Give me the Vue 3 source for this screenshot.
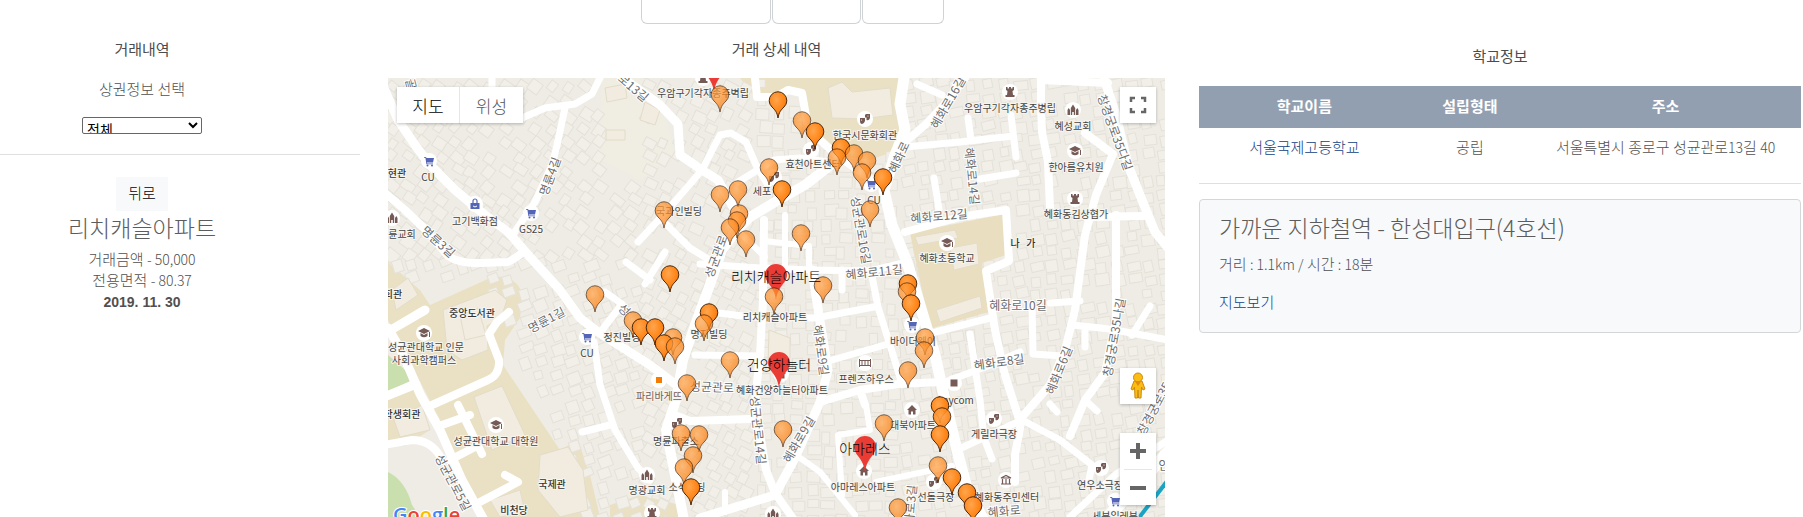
<script setup>
import { ref } from 'vue'

const category = ref('all')

const cells = []
const noise = (n) => {
  const v = Math.sin(n * 127.1 + 11.7) * 43758.5453
  return v - Math.floor(v)
}
for (let row = 0; row < 32; row++) {
  for (let col = 0; col < 50; col++) {
    const id = row * 50 + col
    const cx = 388 + col * 16 + noise(id) * 5
    const cy = 78 + row * 14 + noise(id + 3000) * 4
    const openYard = cx > 598 && cx < 640 && cy < 165
    const campus = cx < 560 && cy > 275 && cx < 480 + (cy - 275) * 0.45
    const northHall = cx > 775 && cx < 900 && cy < 150 && cy < 90 + (cx - 775)
    if (openYard || campus || northHall || noise(id + 9000) < 0.12) continue
    let turn = -14
    if (cx < 640) turn = cy < 260 ? 32 : -24
    else if (cx < 745) turn = 24
    else if (cx < 900) turn = -4
    cells.push({
      id,
      w: 8 + Math.round(noise(id + 5000) * 6),
      h: 8 + Math.round(noise(id + 7000) * 4),
      move: `translate(${cx.toFixed(1)} ${cy.toFixed(1)}) rotate(${turn + Math.round(noise(id + 400) * 8)})`,
    })
  }
}

const roads = [
  { w: 9, d: 'M384 88L398 120L415 145L430 165L455 190L485 215L508 232L530 257L560 290L580 318L598 332L650 365L675 384' },
  { w: 8, d: 'M384 192L405 210L428 232L448 256Q460 264 480 263L508 262Q520 256 524 250' },
  { w: 7, d: 'M512 236L535 202L552 165L557 145L565 108M522 118L545 108L575 104L592 94L600 78M492 78V92M430 202' },
  { w: 9, d: 'M628 82L660 105L678 124L680 155L702 170L718 180L727 196L738 216' },
  { w: 7, d: 'M638 242L665 213L702 170L720 135L731 133L746 142L756 165L768 185M738 182L774 160L800 158L828 162' },
  { w: 7, d: 'M664 222L690 248L716 264M665 252L645 284' },
  { w: 8, d: 'M755 78L757 97L776 97L788 90L802 93L807 122L820 140L838 156L872 180' },
  { w: 11, d: 'M904 78L900 104L905 130L895 155L884 190L892 225L907 262L920 305L935 355L945 400L957 450L968 492L984 520' },
  { w: 10, d: 'M832 164L805 185L775 202L750 217L735 232L722 250L708 290L695 325L683 360L676 400L666 430L672 460L680 500L684 520' },
  { w: 8, d: 'M965 78L945 104L925 125L905 142' },
  { w: 7, d: 'M905 147L960 142L1013 136M968 118L971 140M1011 115L1016 157M917 84L942 95M934 178L939 210M1016 173L980 179' },
  { w: 8, d: 'M1041 78V105L1042 132L1048 162L1050 208M1041 80L1108 83' },
  { w: 9, d: 'M1104 78L1116 115L1128 165L1142 200L1155 232L1168 248' },
  { w: 8, d: 'M1085 133L1113 154L1096 195L1085 235L1075 310L1065 350L1050 385L1022 417L1015 455V482' },
  { w: 8, d: 'M905 232L960 217L1006 210L1009 261L986 271L995 330L1005 375L1018 416M1086 217L1144 216M1116 215V320L1105 373L1085 400L1070 436' },
  { w: 7, d: 'M928 334L990 318M940 384L990 365L1020 352M1050 303L1080 301M1032 304L1033 354L1062 356M1072 325L1110 329L1168 340M1132 335L1150 306M1085 328V347' },
  { w: 7, d: 'M1022 420L1060 440L1092 465L1088 485M957 450L1020 421M1085 400L1097 411M1050 404L1057 412M970 334L980 400L984 438L992 459' },
  { w: 8, d: 'M764 220L763 300L760 355L755 402L766 470L775 493L794 520' },
  { w: 9, d: 'M812 270L819 315L828 370L820 402L796 456L775 495L700 518' },
  { w: 7, d: 'M700 264L760 268L812 270L870 271L907 262M711 312L750 317L815 318L874 307M695 355L760 356M825 362L888 344M871 271L878 307L890 345L902 384M842 270V290' },
  { w: 8, d: 'M820 402L860 390L898 384L942 382M672 414L690 421L750 419M860 390L865 405' },
  { w: 6, d: 'M866 405L870 430L838 435L842 495M876 482L952 466M796 455L820 472L855 515M725 492V512M735 228L765 257M785 215V265M809 246V270M764 241L808 246' },
  { w: 9, d: 'M388 328L402 352L420 394L440 430L462 480L484 520M384 334L425 310M384 397L416 384' },
  { w: 8, d: 'M432 405L488 380Q500 375 499 360L489 334L497 322L509 312M442 425L470 415M458 405L482 454M450 460L477 446M478 503L518 482L505 475M384 445L412 440Q430 440 440 456' },
  { w: 7, d: 'M594 342L600 385L615 430L638 468L650 480M582 432L610 425M605 292L622 304L602 330M626 262L650 280M1070 517L1115 475L1168 440' },
  { w: 12, d: 'M1105 520L1168 452' },
]

const pale = 0.72
const pins = [
  [720, 112, pale], [778, 118, 1], [802, 138, pale], [815, 149, 1], [841, 165, 1], [854, 171, pale],
  [837, 175, pale], [867, 178, pale], [862, 190, pale], [883, 195, 1], [870, 227, pale], [769, 185, pale],
  [782, 207, 1], [720, 212, pale], [738, 207, pale], [664, 228, pale], [739, 231, pale], [737, 238, pale],
  [730, 245, pale], [746, 257, pale], [801, 251, pale], [670, 292, 1], [823, 303, pale], [774, 314, pale],
  [709, 330, 1], [704, 341, pale], [595, 312, pale], [633, 338, pale], [641, 345, 1], [655, 345, 1],
  [673, 355, pale], [664, 361, 1], [675, 364, pale], [730, 378, pale], [687, 401, pale], [783, 447, pale],
  [681, 451, pale], [699, 452, pale], [693, 473, pale], [684, 485, pale], [691, 505, 1], [884, 441, pale],
  [898, 525, pale], [908, 388, pale], [908, 301, 1], [907, 309, pale], [911, 321, 1], [925, 355, pale],
  [924, 368, pale], [940, 423, 1], [942, 434, 0.9], [940, 452, 1], [938, 483, pale], [952, 495, 1],
  [967, 510, 1], [973, 523, 1],
]

const homes = [
  { x: 714, y: 91, name: '' },
  { x: 776, y: 299, name: '리치캐슬아파트' },
  { x: 779, y: 387, name: '건양하늘터' },
  { x: 865, y: 471, name: '아마레스' },
]

const places = [
  [703, 92, '우암구기각자종주벽립', 'tower', 703, 78], [865, 134, '한국시문화회관', 'mask', 865, 119],
  [813, 163, '효천아트센터', 'mask', 811, 150], [762, 190, '세포', 'mask', 774, 177], [679, 210, '국과인빌딩'],
  [874, 199, 'CU', 'cart', 871, 184], [428, 176, 'CU', 'cart', 429, 161], [475, 220, '고기백화점', 'bag', 475, 204],
  [531, 228, 'GS25', 'cart', 531, 213], [402, 233, '륜교회', 'church', 392, 218],
  [1010, 107, '우암구기각자종주병립', 'tower', 1010, 92], [1073, 125, '혜성교회', 'church', 1073, 110],
  [1076, 166, '한아름유치원', 'cap', 1075, 151], [1076, 213, '혜화동김상협가', 'tower', 1075, 199],
  [947, 257, '혜화초등학교', 'cap', 947, 243], [426, 346, '성균관대학교 인문', 'cap', 424, 333],
  [424, 359, '사회과학캠퍼스'], [587, 352, 'CU', 'cart', 587, 337], [622, 336, '정진빌딩'],
  [496, 440, '성균관대학교 대학원', 'cap', 496, 425], [647, 489, '명광교회', 'church', 647, 475],
  [775, 316, '리치캐슬아파트'], [709, 333, '명지빌딩'], [782, 389, '혜화건양하늘터아파트', 'home', 781, 374],
  [866, 378, '프렌즈하우스', 'hotel', 865, 363], [913, 340, '바이더웨이', 'cart', 912, 325],
  [676, 440, '명륜파출소', 'mask', 677, 423], [687, 486, '소석빌딩'], [863, 486, '아마레스아파트', 'home', 864, 471],
  [913, 424, '대북아파트', 'home', 912, 410], [955, 399, 'Anycom', 'square', 954, 383],
  [994, 433, '게릴라극장', 'mask', 994, 419], [1100, 484, '연우소극장', 'mask', 1101, 468],
  [936, 496, '선돌극장', 'mask', 934, 482], [1007, 496, '혜화동주민센터', 'hall', 1006, 480],
  [1115, 515, '세븐일레븐', 'cart', 1115, 501], [652, 530, '', 'tower', 652, 513], [773, 530, '', 'church', 773, 514],
]

const halls = [
  [397, 172, '현관'], [1023, 242, '나 \u00a0 가'], [393, 293, '회관'], [472, 312, '중앙도서관'],
  [402, 413, '학생회관'], [552, 483, '국제관'], [514, 509, '비천당'],
]

const streets = [
  [898, 157, -65, '혜화로'], [862, 230, 80, '성균관로16길'], [715, 256, -70, '성균관로'], [549, 176, -70, '명륜4길'],
  [439, 241, 42, '명륜3길'], [634, 87, 40, '로13길'], [412, 84, 75, '골'], [947, 102, -60, '혜화로16길'],
  [973, 176, 84, '혜화로14길'], [939, 215, -5, '혜화로12길'], [1116, 132, 70, '창경궁로35다길'],
  [546, 319, -28, '명륜1길'], [625, 309, 45, '성'], [454, 482, 62, '성균관로5길'], [874, 271, -6, '혜화로11길'],
  [822, 350, 82, '혜화로9길'], [712, 386, 2, '성균관로'], [759, 430, 84, '성균관로14길'], [798, 439, -60, '혜화로9길'],
  [909, 510, -85, '혜화로3길'], [1018, 304, 0, '혜화로10길'], [999, 361, -8, '혜화로8길'], [1058, 370, -68, '혜화로6길'],
  [1113, 337, -80, '창경궁로35나길'], [1153, 408, -62, '창경궁로35'], [1004, 510, -5, '혜화로'], [1164, 464, 0, '안'],
]
</script>

<template>
  <main class="page">
    <section class="side">
      <div class="side-block">
        <h2 class="heading">거래내역</h2>
        <label class="filter-label" for="category">상권정보 선택</label>
        <select id="category" v-model="category" class="filter">
          <option value="all">전체</option>
        </select>
      </div>
      <hr class="rule" />
      <div class="side-block deal">
        <button class="back" type="button">뒤로</button>
        <h3 class="title">리치캐슬아파트</h3>
        <p class="line">거래금액 <span class="num">- 50,000</span></p>
        <p class="line">전용면적 <span class="num">- 80.37</span></p>
        <p class="line"><time class="date" datetime="2019-11-30">2019. 11. 30</time></p>
      </div>
    </section>

    <section class="center">
      <div class="tabs">
        <span class="tab wide"></span><span class="tab mid"></span><span class="tab small"></span>
      </div>
      <h2 class="heading">거래 상세 내역</h2>
      <div class="map">
        <svg class="canvas" viewBox="388 78 777 439" preserveAspectRatio="xMinYMin slice" role="img" aria-label="지도">
          <defs>
            <radialGradient id="ball" cx="0.4" cy="0.3" r="0.75">
              <stop offset="0" stop-color="#ffa64f" /><stop offset="0.5" stop-color="#ff8a1f" /><stop offset="1" stop-color="#f57200" />
            </radialGradient>
            <g id="pin">
              <path d="M0 0C-1 -6 -3 -8 -6 -11A8.8 8.8 0 1 1 6 -11C3 -8 1 -6 0 0Z" fill="url(#ball)" stroke="#49260a" stroke-width="1" />
            </g>
            <path id="drop" d="M0 1C-1 -7 -4 -11 -7 -15Q-11 -20 -11 -24A11 11 0 0 1 11 -24Q11 -20 7 -15C4 -11 1 -7 0 1Z" />
            <g id="cart" fill="#5465b8"><path d="M-5 -4H-3L-2.500 -3H5L4 1.500H-2L-1.800 2.500H4V3.300H-2.600L-3.600 -3.200H-5Z" /><circle cx="-1.500" cy="4.500" r="1" /><circle cx="3" cy="4.500" r="1" /></g>
            <g id="bag"><path d="M-4.500 -1H4.500V5H-4.500Z" fill="#5465b8" /><path d="M-2 -1V-3A2 2 0 0 1 2 -3V-1" fill="none" stroke="#5465b8" stroke-width="1.200" /><path d="M-2 2Q0 4 2 2" fill="none" stroke="#fff" /></g>
            <path id="tower" fill="#755a56" d="M-4 -5H-2.500V-3.500H-1V-5H1V-3.500H2.500V-5H4V-2L2.500 -1L3 3H4.500V5H-4.500V3H-3L-2.500 -1L-4 -2Z" />
            <path id="church" fill="#755a56" d="M-5.500 5V0L-4.300 -2L-3 0V5ZM-2.200 5V-2L0 -5.500L2.200 -2V5H0.800V2H-0.800V5ZM3 5V0L4.300 -2L5.500 0V5Z" />
            <path id="cap" fill="#755a56" d="M0 -5L6 -2L0 1L-6 -2ZM-3.500 0L0 2L3.500 0V3Q0 5.500 -3.500 3ZM5 -1H6V4H5Z" />
            <g id="mask" fill="#755a56"><path d="M-5 -1H0V2Q-1 5 -3 5T-5 2Z" /><path d="M1 -5H5V-1Q4 2 1.500 1V-1.500H0V-4Z" /><circle cx="-3.500" cy="1" r=".6" fill="#fff" /><circle cx="3" cy="-3" r=".6" fill="#fff" /></g>
            <path id="home" fill="#755a56" d="M0 -5L5 0H3.500V4.500H1V1.500H-1V4.500H-3.500V0H-5Z" />
            <path id="hotel" fill="none" stroke="#755a56" d="M-5.500 -4V4M-5.500 2.500H5.500M-5.500 -2.500H5.500M5.500 -4V4M-3 -2V2M0 -2V2M3 -2V2" />
            <path id="hall" fill="none" stroke="#755a56" stroke-width="1.200" d="M-5 -2L0 -4.500L5 -2ZM-3.500 -1V3.500M0 -1V3.500M3.500 -1V3.500M-5 4H5" />
            <path id="square" fill="#755a56" d="M-3.500 -3.500H3.500V3.500H-3.500Z" />
          </defs>

          <rect x="388" y="78" width="777" height="439" fill="#eeece5" />
          <path fill="#f0ede3" d="M602 78H640L665 112L675 155L640 180L600 160Z" />
          <path fill="#eae1c4" d="M740 78H903L898 150L870 160L835 155L812 132L802 93L755 97Z" />
          <path fill="#eae1c4" d="M388 262L420 290L430 305L490 278Q515 272 523 295L520 318L505 340L503 365L560 450L578 440L590 475L600 517H480L440 420L388 320Z" />
          <path fill="#eae1c4" d="M388 400L415 388L430 430L405 446H388ZM610 505L640 495L680 505V517H610Z" />
          <path fill="#c9dfae" d="M388 355L405 370L412 380L388 392ZM388 472Q405 480 412 505L420 517H388Z" />
          <g class="houses">
            <rect v-for="c in cells" :key="c.id" :width="c.w" :height="c.h" :transform="c.move" />
          </g>
          <path fill="#e9dfc0" d="M910 233L1004 214L1006 255L982 263L988 312L930 329Z" />
          <g class="blocks">
            <path d="M828 88L842 82L852 92L890 88L893 115L862 119L832 118Z" />
            <path d="M605 88L625 84L627 98L607 102ZM606 130H625V140H606ZM645 102L660 110L655 125L640 120Z" />
            <path d="M443 310L495 290L507 300L501 318L487 326L488 350L462 360L447 350Z" />
            <path d="M474 397L502 386L525 435L492 450Z" />
            <path d="M540 455L568 447L583 470L588 510L560 517L538 490Z" />
            <path d="M394 420L422 405L430 430L400 437ZM392 290L408 278L418 295L396 310Z" />
            <path d="M490 500L520 490L525 512L500 517ZM460 315L478 308L486 335L465 340Z" />
            <path d="M915 237L955 230L958 238L918 245ZM950 248L977 243L979 264L954 270Z" />
            <path d="M936 310L980 296L982 308L940 322ZM769 330L790 338V358L768 365Z" />
          </g>
          <g class="roads"><path v-for="(r, i) in roads" :key="i" :d="r.d" :stroke-width="r.w" /></g>
          <path d="M1138 519L1168 480" stroke="#1ba3c4" stroke-width="4" />

          <g class="street"><text v-for="(s, i) in streets" :key="i" :transform="`translate(${s[0]} ${s[1]}) rotate(${s[2]})`">{{ s[3] }}</text></g>
          <g class="place">
            <template v-for="(p, i) in places" :key="i">
              <g v-if="p[3]" :transform="`translate(${p[4]} ${p[5]})`"><circle r="8" fill="#fff" /><use :href="'#' + p[3]" /></g>
              <text v-if="p[2]" :x="p[0]" :y="p[1]">{{ p[2] }}</text>
            </template>
            <circle cx="659" cy="380" r="8" fill="#fff" /><path d="M656 377H662V383H656Z" fill="#f57c00" />
            <text class="shop" x="659" y="395">파리바게뜨</text>
          </g>
          <g class="place hall"><text v-for="(h, i) in halls" :key="i" :x="h[0]" :y="h[1]">{{ h[2] }}</text></g>

          <use v-for="(h, i) in homes" :key="i" href="#drop" :x="h.x" :y="h.y" fill="#ea3b35" />
          <use v-for="(p, i) in pins" :key="i" href="#pin" :x="p[0]" :y="p[1]" :opacity="p[2]" />
          <g class="home-name"><text v-for="(h, i) in homes" :key="i" :x="h.x" :y="h.y - 23">{{ h.name }}</text></g>
          <text class="logo" x="393" y="522"><tspan fill="#4285f4">G</tspan><tspan fill="#ea4335">o</tspan><tspan fill="#fbbc05">o</tspan><tspan fill="#4285f4">g</tspan><tspan fill="#34a853">l</tspan><tspan fill="#ea4335">e</tspan></text>
        </svg>

        <div class="control types">
          <button class="type on" type="button">지도</button>
          <button class="type" type="button">위성</button>
        </div>
        <button class="control full" type="button" aria-label="전체화면">
          <svg width="18" height="18" viewBox="0 0 18 18"><path d="M2 6V2H6M12 2H16V6M16 12V16H12M6 16H2V12" fill="none" stroke="#666" stroke-width="2.500" /></svg>
        </button>
        <div class="tools">
          <button class="control peg" type="button" aria-label="거리뷰">
            <svg width="18" height="28" viewBox="0 0 18 28"><path d="M5 9H13L16 17L14 18L12.500 15L12 26H9.500L9 18L8.500 26H6L5.500 15L4 18L2 17Z" fill="#fbbc14" stroke="#c98a13" /><circle cx="9" cy="5.500" r="4.500" fill="#fbbc14" stroke="#c98a13" /><path d="M6 9.500H12L9 14Z" fill="#e28a12" /></svg>
          </button>
          <div class="control zoom">
            <button type="button" aria-label="확대"><svg width="16" height="16" viewBox="0 0 16 16"><path d="M0 8H16M8 0V16" stroke="#666" stroke-width="4" /></svg></button>
            <button type="button" aria-label="축소"><svg width="16" height="16" viewBox="0 0 16 16"><path d="M0 8H16" stroke="#666" stroke-width="4" /></svg></button>
          </div>
        </div>
      </div>
    </section>

    <section class="info">
      <h2 class="heading">학교정보</h2>
      <table class="schools">
        <thead>
          <tr><th scope="col" class="c-name">학교이름</th><th scope="col" class="c-type">설립형태</th><th scope="col">주소</th></tr>
        </thead>
        <tbody>
          <tr><td><a href="#school">서울국제고등학교</a></td><td>공립</td><td>서울특별시 종로구 성균관로<span class="num">13</span>길 <span class="num">40</span></td></tr>
        </tbody>
      </table>
      <hr class="rule" />
      <article class="card">
        <h3 class="title">가까운 지하철역 - 한성대입구(4호선)</h3>
        <p class="distance">거리 <span class="num">: 1.1km /</span> 시간 <span class="num">: 18</span>분</p>
        <a href="#map">지도보기</a>
      </article>
    </section>
  </main>
</template>

<style>
body { margin: 0; background: #fff; }
</style>

<style scoped>
* { box-sizing: border-box; }
.page {
  display: grid;
  grid-template-columns: 360fr 777fr 608fr;
  column-gap: 28px;
  padding-right: 2px;
  height: 100vh;
  overflow: hidden;
  color: #505050;
  font: 300 15px/21px "Noto Sans CJK KR", "Noto Sans", sans-serif;
}
h2, h3, p { margin: 0; }
button { padding: 0; border: 0; font: inherit; cursor: pointer; }
a { color: #0f3f85; text-decoration: none; }
.heading { color: #4c4c4c; font-size: 15px; font-weight: 400; line-height: 24px; text-align: center; }
.title { color: #5c5c5c; font-size: 23px; font-weight: 300; line-height: 32px; }
.num { font-size: 14px; line-height: 14px; }
.rule { width: 100%; margin: 0; border: 0; border-top: 1px solid #dfdfdf; }

.side-block { display: flex; flex-direction: column; align-items: center; padding: 37px 76px 20px 0; }
.filter-label { margin: 16px 0; line-height: 24px; }
.filter {
  width: 120px;
  height: 17px;
  padding: 0;
  border: 1px solid #666;
  border-radius: 2px;
  background: #fff;
  color: #000;
  font: 400 14px/14px "Noto Sans CJK KR", sans-serif;
}
.deal { padding-top: 22px; }
.back { width: 52px; height: 34px; padding-bottom: 4px; background: #f8f9fa; color: #000; }
.deal .title { margin: 0 0 5px; }
.date { font-family: "Liberation Sans", sans-serif; font-size: 14px; font-weight: 700; line-height: 14px; }

.center { display: flex; flex-direction: column; min-width: 0; }
.tabs { display: flex; gap: 1px; justify-content: center; height: 24px; padding-left: 32px; margin-bottom: 13px; }
.tab { border: 1px solid #d0d3d6; border-top: 0; border-radius: 0 0 6px 6px; }
.wide { width: 130px; }
.mid { width: 89px; }
.small { width: 82px; }
.map { position: relative; flex: 1; min-height: 0; margin-top: 17px; overflow: hidden; }
.canvas { display: block; width: 100%; height: 100%; }
.houses rect { fill: #f1efe8; stroke: #e4e1d9; stroke-width: 1; }
.blocks path { fill: #f1ecdf; stroke: #e3dcc9; stroke-width: 1; }
.roads path { fill: none; stroke: #fff; stroke-linecap: round; stroke-linejoin: round; }
text { text-anchor: middle; dominant-baseline: central; paint-order: stroke; }
.street { fill: #6c6c6c; font-size: 12px; font-weight: 400; }
.street text { stroke: #fff; stroke-width: 2px; }
.place { fill: #444; font-size: 10px; font-weight: 400; }
.place text { stroke: #f7f5f0; stroke-width: 2px; }
.place .shop { fill: #755a56; }
.hall { fill: #333; font-weight: 500; }
.home-name { fill: #000; font-size: 14px; font-weight: 300; }
.logo { font: 600 20px "Open Sans", sans-serif; text-anchor: start; dominant-baseline: auto; stroke: #fff; stroke-width: 2px; }

.control { display: flex; align-items: center; justify-content: center; background: #fff; box-shadow: 0 1px 3px rgba(0, 0, 0, 0.25); }
.types { position: absolute; top: 9px; left: 9px; height: 36px; }
.type { width: 63px; height: 36px; background: #fff; color: #565656; font-size: 17px; }
.type.on { border-right: 1px solid #e6e6e6; color: #000; }
.full { position: absolute; top: 9px; right: 9px; width: 36px; height: 36px; }
.tools { position: absolute; right: 9px; bottom: 12px; display: flex; flex-direction: column; gap: 29px; }
.peg { width: 36px; height: 36px; }
.zoom { flex-direction: column; width: 36px; }
.zoom button { display: flex; align-items: center; justify-content: center; width: 36px; height: 36px; background: #fff; }
.zoom button + button { width: 28px; border-top: 1px solid #e6e6e6; }

.info { padding: 44px 0 0 6px; }
.schools { width: 100%; margin: 18px 0 14px; border-collapse: collapse; table-layout: fixed; text-align: center; }
.schools th { height: 42px; padding: 0 0 4px; background: #929fb1; color: #fff; font-weight: 700; }
.schools td { height: 41px; padding: 0 0 4px; white-space: nowrap; }
.c-name { width: 35%; }
.c-type { width: 20%; }
.card { margin-top: 15px; padding: 11px 19px 20px; border: 1px solid #d3d7da; border-radius: 4px; background: #f8f9fb; }
.distance { margin: 10px 0 17px; }
</style>
